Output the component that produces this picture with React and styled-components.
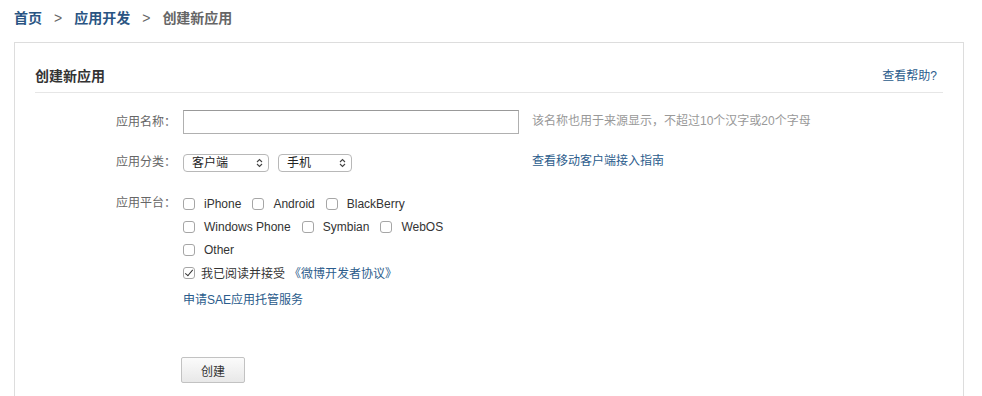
import React from "react";
import styled, { createGlobalStyle } from "styled-components";

const Global = createGlobalStyle`
  html, body { margin: 0; padding: 0; background: #fff; }
  body {
    font-family: "Liberation Sans", "Noto Sans CJK SC", sans-serif;
    font-size: 12px;
    color: #333;
  }
`;

const Crumbs = styled.nav`
  display: flex;
  align-items: center;
  padding: 8px 14px 0;
  line-height: 20px;
  font-size: 14px;
  font-weight: bold;
`;

const CrumbLink = styled.a`
  color: #2a5583;
  text-decoration: none;
`;

const CrumbSep = styled.span`
  color: #666;
  font-weight: normal;
  margin: 0 12px;
`;

const CrumbCurrent = styled.span`
  color: #666;
`;

const Panel = styled.section`
  box-sizing: border-box;
  width: 950px;
  margin: 14px 0 0 14px;
  border: 1px solid #ddd;
  border-bottom: none;
  padding: 0 20px 60px;
`;

const PanelHead = styled.header`
  display: flex;
  justify-content: space-between;
  align-items: center;
  padding: 23px 6px 6px 0;
  line-height: 20px;
  border-bottom: 1px solid #e6e6e6;
`;

const Title = styled.h2`
  margin: 0;
  font-size: 14px;
  font-weight: bold;
  color: #333;
`;

const Link = styled.a`
  color: #2b5c8c;
  text-decoration: none;
  font-size: 12px;
`;

const Form = styled.form`
  padding-top: 17px;
`;

const Row = styled.div`
  display: flex;
  align-items: flex-start;
  margin-top: ${(p) => p.$gap || 0}px;
`;

const Label = styled.label`
  flex: 0 0 141px;
  text-align: right;
  margin-right: 7px;
  color: #666;
  line-height: ${(p) => p.$lh}px;
`;

const Field = styled.div`
  flex: 0 0 336px;
  display: flex;
  gap: 9px;
`;

const TextInput = styled.input`
  box-sizing: border-box;
  width: 336px;
  height: 24px;
  margin: 0;
  border: 1px solid #b0b0b0;
  border-top-color: #999;
  padding: 2px 4px;
  font: inherit;
`;

const Aside = styled.div`
  margin-left: 13px;
  line-height: ${(p) => p.$lh}px;
  color: #999;
`;

const SelectWrap = styled.div`
  position: relative;
  width: ${(p) => p.$w}px;
  height: 18px;
`;

const Select = styled.select`
  appearance: none;
  box-sizing: border-box;
  width: 100%;
  height: 18px;
  margin: 0;
  padding: 0 0 0 8px;
  border: 1px solid #b8b8b8;
  border-radius: 4px;
  background: #fff;
  font: inherit;
  font-size: 12px;
  color: #222;
  line-height: 16px;
`;

const Chevrons = styled.svg`
  position: absolute;
  right: 6px;
  top: 4px;
  pointer-events: none;
`;

const Platforms = styled.div`
  display: flex;
  flex-direction: column;
`;

const Line = styled.div`
  display: flex;
  align-items: center;
  height: 23px;
`;

const Option = styled.label`
  display: inline-flex;
  align-items: center;
  margin-right: 11px;
  color: #333;
`;

const Check = styled.input`
  appearance: none;
  box-sizing: border-box;
  width: 12px;
  height: 12px;
  margin: 1px ${(p) => p.$space}px 0 0;
  border: 1px solid #a6a6a6;
  border-radius: 3px;
  background: #fff;
  position: relative;
  &:checked::after {
    content: "";
    position: absolute;
    left: 3px;
    top: 0px;
    width: 3px;
    height: 7px;
    border: solid #333;
    border-width: 0 1.5px 1.5px 0;
    transform: rotate(40deg);
  }
`;

const Agree = styled.span`
  color: #333;
`;

const SaeLine = styled.div`
  margin-top: 5px;
  line-height: 23px;
`;

const ButtonRow = styled.div`
  margin-top: 45px;
  padding-left: 146px;
`;

const Button = styled.button`
  width: 64px;
  height: 26px;
  border: 1px solid #c2c2c2;
  border-radius: 2px;
  background: linear-gradient(#fbfbfb, #e8e8e8);
  font: inherit;
  font-size: 12px;
  color: #333;
  padding: 0;
`;

const Arrows = () => (
  <Chevrons width="7" height="10" viewBox="0 0 7 10">
    <path d="M1 4 L3.5 1.5 L6 4 M1 6 L3.5 8.5 L6 6" fill="none" stroke="#444" strokeWidth="1.1" />
  </Chevrons>
);

const platforms = [
  ["iPhone", "Android", "BlackBerry"],
  ["Windows Phone", "Symbian", "WebOS"],
  ["Other"],
];

export default function App() {
  return (
    <>
      <Global />
      <Crumbs>
        <CrumbLink href="#">首页</CrumbLink>
        <CrumbSep>&gt;</CrumbSep>
        <CrumbLink href="#">应用开发</CrumbLink>
        <CrumbSep>&gt;</CrumbSep>
        <CrumbCurrent>创建新应用</CrumbCurrent>
      </Crumbs>
      <Panel>
        <PanelHead>
          <Title>创建新应用</Title>
          <Link href="#">查看帮助?</Link>
        </PanelHead>
        <Form onSubmit={(e) => e.preventDefault()}>
          <Row>
            <Label $lh={24}>应用名称：</Label>
            <Field>
              <TextInput type="text" />
            </Field>
            <Aside $lh={22}>该名称也用于来源显示，不超过10个汉字或20个字母</Aside>
          </Row>
          <Row $gap={20}>
            <Label $lh={16}>应用分类：</Label>
            <Field>
              <SelectWrap $w={86}>
                <Select defaultValue="client">
                  <option value="client">客户端</option>
                </Select>
                <Arrows />
              </SelectWrap>
              <SelectWrap $w={74}>
                <Select defaultValue="phone">
                  <option value="phone">手机</option>
                </Select>
                <Arrows />
              </SelectWrap>
            </Field>
            <Aside $lh={14}>
              <Link href="#">查看移动客户端接入指南</Link>
            </Aside>
          </Row>
          <Row $gap={20}>
            <Label $lh={23}>应用平台：</Label>
            <Platforms>
              {platforms.map((line, i) => (
                <Line key={i}>
                  {line.map((name) => (
                    <Option key={name}>
                      <Check type="checkbox" $space={9} />
                      {name}
                    </Option>
                  ))}
                </Line>
              ))}
              <Line>
                <Option>
                  <Check type="checkbox" $space={6} defaultChecked />
                  <Agree>我已阅读并接受</Agree>
                </Option>
                <Link href="#" style={{ marginLeft: -7 }}>《微博开发者协议》</Link>
              </Line>
              <SaeLine>
                <Link href="#">申请SAE应用托管服务</Link>
              </SaeLine>
            </Platforms>
          </Row>
          <ButtonRow>
            <Button type="submit">创建</Button>
          </ButtonRow>
        </Form>
      </Panel>
    </>
  );
}
